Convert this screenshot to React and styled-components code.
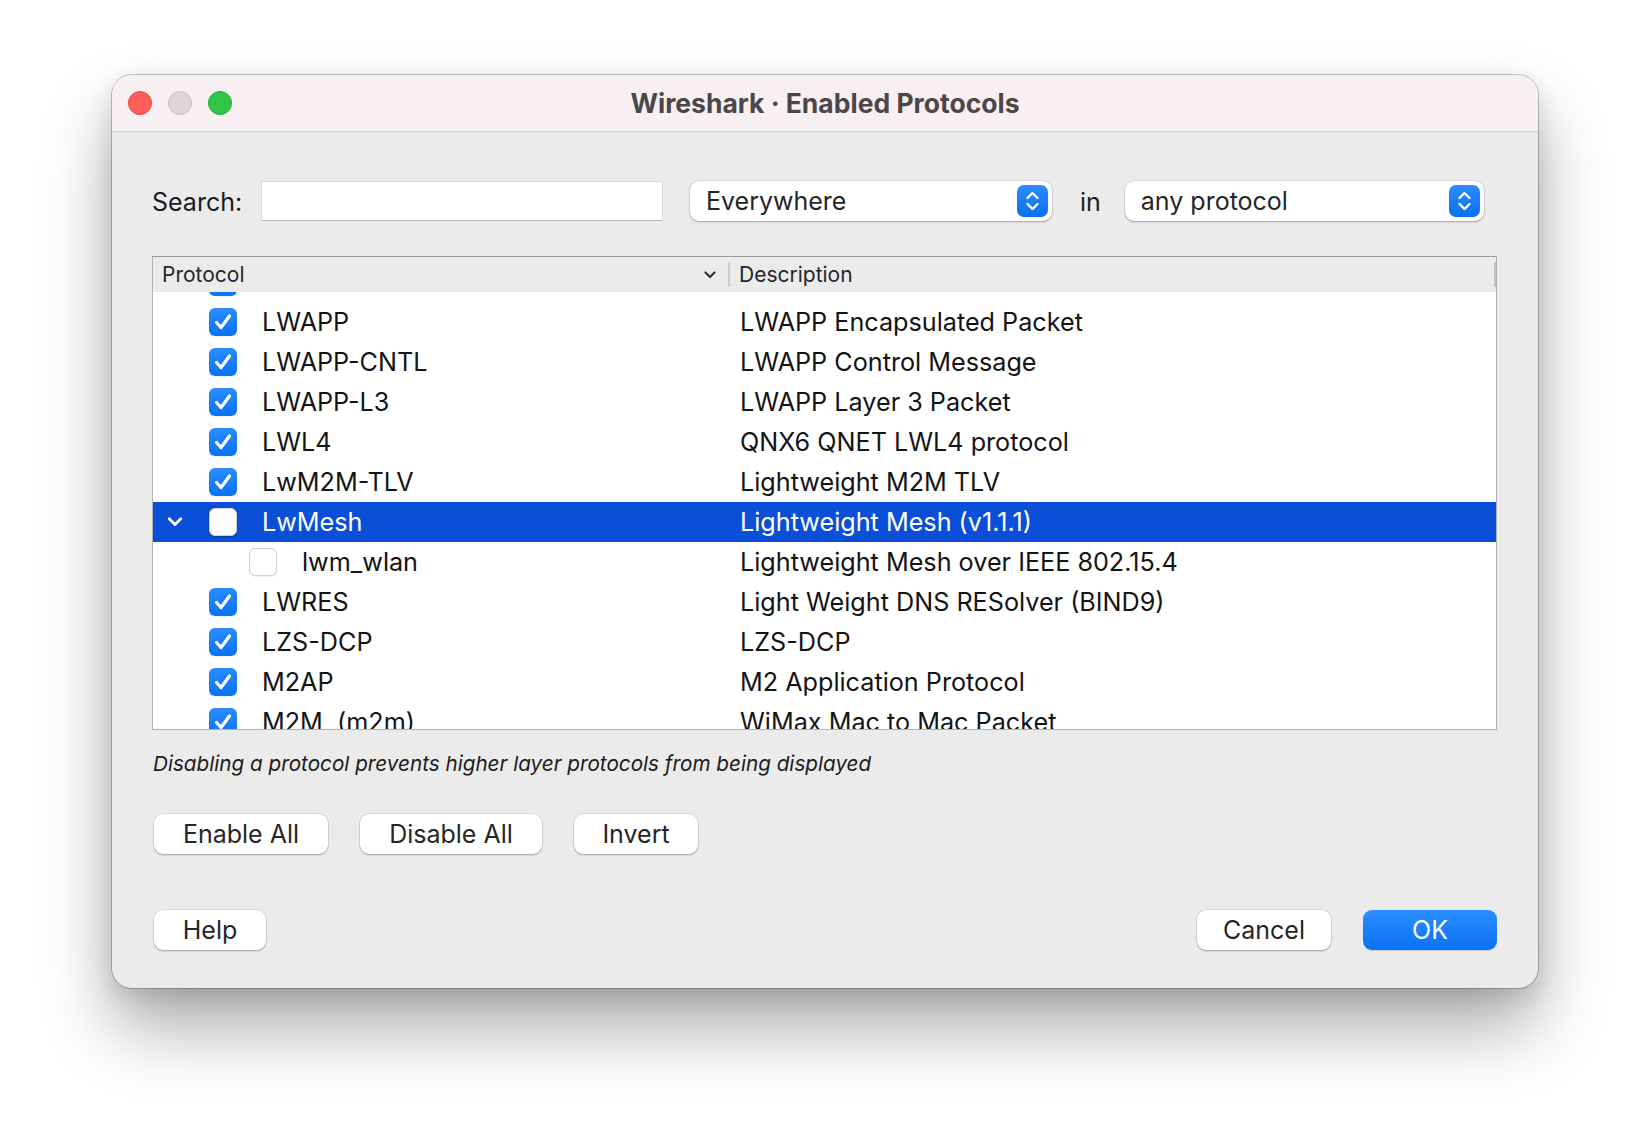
import React from "react";
import styled, { createGlobalStyle } from "styled-components";

const GlobalStyle = createGlobalStyle`
  html, body {
    margin: 0;
    padding: 0;
    background: #ffffff;
  }
  body {
    font-family: "Inter", "Liberation Sans", sans-serif;
    color: #1e1e1e;
  }
`;

const protocols = [
  { name: "LWAPP-ALT", desc: "LWAPP Alternate", checked: true },
  { name: "LWAPP", desc: "LWAPP Encapsulated Packet", checked: true },
  { name: "LWAPP-CNTL", desc: "LWAPP Control Message", checked: true },
  { name: "LWAPP-L3", desc: "LWAPP Layer 3 Packet", checked: true },
  { name: "LWL4", desc: "QNX6 QNET LWL4 protocol", checked: true },
  { name: "LwM2M-TLV", desc: "Lightweight M2M TLV", checked: true },
  { name: "LwMesh", desc: "Lightweight Mesh (v1.1.1)", checked: false, expanded: true, selected: true },
  { name: "lwm_wlan", desc: "Lightweight Mesh over IEEE 802.15.4", checked: false, child: true },
  { name: "LWRES", desc: "Light Weight DNS RESolver (BIND9)", checked: true },
  { name: "LZS-DCP", desc: "LZS-DCP", checked: true },
  { name: "M2AP", desc: "M2 Application Protocol", checked: true },
  { name: "M2M  (m2m)", desc: "WiMax Mac to Mac Packet", checked: true },
];

const Stepper = () => (
  <StepperBox>
    <svg width="31" height="32" viewBox="0 0 31 32">
      <path d="M10.5 13 L15.5 8 L20.5 13" fill="none" stroke="#fff" strokeWidth="2.4" strokeLinecap="round" strokeLinejoin="round" />
      <path d="M10.5 19 L15.5 24 L20.5 19" fill="none" stroke="#fff" strokeWidth="2.4" strokeLinecap="round" strokeLinejoin="round" />
    </svg>
  </StepperBox>
);

const Check = ({ checked, selected }) => (
  <CheckBox $checked={checked} $selected={selected}>
    {checked && (
      <svg width="28" height="28" viewBox="0 0 28 28">
        <path d="M7.5 14.5 L12 19.5 L20.5 8" fill="none" stroke="#fff" strokeWidth="3.2" strokeLinecap="round" strokeLinejoin="round" />
      </svg>
    )}
  </CheckBox>
);

const Chevron = ({ color, size = 14 }) => (
  <svg width={size} height={size} viewBox="0 0 14 14">
    <path d="M2.5 4.5 L7 9 L11.5 4.5" fill="none" stroke={color} strokeWidth="2.2" strokeLinecap="round" strokeLinejoin="round" />
  </svg>
);

const App = () => {
  return (
    <Page>
      <GlobalStyle />
      <Window>
        <TitleBar>
          <Lights>
            <Light $bg="#fe5f58" $border="#e2463f" />
            <Light $bg="#ddd5d9" $border="#c8bfc4" />
            <Light $bg="#30c748" $border="#22ab35" />
          </Lights>
          <Title>Wireshark · Enabled Protocols</Title>
          <span />
        </TitleBar>

        <Body>
          <SearchRow>
            <Label>Search:</Label>
            <SearchInput />
            <Select $width={362}>
              <span>Everywhere</span>
              <Stepper />
            </Select>
            <InLabel>in</InLabel>
            <Select $width={359}>
              <span>any protocol</span>
              <Stepper />
            </Select>
          </SearchRow>

          <Table>
            <HeaderRow>
              <HeaderCell>
                Protocol
                <HeaderChevron>
                  <Chevron color="#333" size={14} />
                </HeaderChevron>
              </HeaderCell>
              <HeaderCell $last>Description</HeaderCell>
            </HeaderRow>
            <TableBody>
              <RowList>
                {protocols.map((p) => (
                  <Row key={p.name} $selected={p.selected}>
                    <NameCell $child={p.child}>
                      <Disclosure>
                        {p.expanded && <Chevron color="#fff" size={18} />}
                      </Disclosure>
                      <Check checked={p.checked} selected={p.selected} />
                      <NameText>{p.name}</NameText>
                    </NameCell>
                    <DescCell>{p.desc}</DescCell>
                  </Row>
                ))}
              </RowList>
            </TableBody>
          </Table>

          <Hint>Disabling a protocol prevents higher layer protocols from being displayed</Hint>

          <ButtonRow>
            <Button $width={174}>Enable All</Button>
            <Button $width={182}>Disable All</Button>
            <Button $width={124}>Invert</Button>
          </ButtonRow>

          <FooterRow>
            <Button $width={112}>Help</Button>
            <FooterRight>
              <Button $width={134}>Cancel</Button>
              <Button $width={134} $primary>OK</Button>
            </FooterRight>
          </FooterRow>
        </Body>
      </Window>
    </Page>
  );
};

const Page = styled.div`
  width: 1650px;
  height: 1136px;
  box-sizing: border-box;
  padding: 75px 0 0 112px;
  overflow: hidden;
`;

const Window = styled.div`
  width: 1426px;
  height: 913px;
  box-sizing: border-box;
  border-radius: 20px;
  background: #ebebeb;
  overflow: hidden;
  box-shadow: 0 0 0 1px rgba(0, 0, 0, 0.22), 0 40px 70px rgba(0, 0, 0, 0.33),
    0 8px 24px rgba(0, 0, 0, 0.12);
  display: flex;
  flex-direction: column;
`;

const TitleBar = styled.div`
  height: 56px;
  flex-shrink: 0;
  background: #f8eff2;
  border-bottom: 1px solid #d2cdd0;
  display: grid;
  grid-template-columns: 1fr auto 1fr;
  align-items: center;
  padding: 0 16px;
`;

const Lights = styled.div`
  display: flex;
  gap: 16px;
`;

const Light = styled.span`
  width: 24px;
  height: 24px;
  box-sizing: border-box;
  border-radius: 50%;
  background: ${(p) => p.$bg};
  border: 1px solid ${(p) => p.$border};
`;

const Title = styled.div`
  font-size: 26.5px;
  font-weight: 700;
  color: #4b4647;
`;

const Body = styled.div`
  padding: 49px 41px 0 40px;
  display: flex;
  flex-direction: column;
`;

const SearchRow = styled.div`
  display: flex;
  align-items: center;
  height: 40px;
`;

const Label = styled.span`
  font-size: 25px;
  color: #1c1c1c;
  width: 110px;
  flex-shrink: 0;
  margin-top: 2px;
`;

const SearchInput = styled.div`
  width: 400px;
  height: 38px;
  background: #fff;
  box-shadow: 0 1px 0 #b9b9b9, 0 0 0 1px #dadada;
  flex-shrink: 0;
`;

const Select = styled.div`
  width: ${(p) => p.$width}px;
  height: 40px;
  box-sizing: border-box;
  margin-left: 28px;
  background: #fff;
  border-radius: 9px;
  box-shadow: 0 1px 2px rgba(0, 0, 0, 0.28), 0 0 0 0.5px rgba(0, 0, 0, 0.12);
  display: flex;
  align-items: center;
  justify-content: space-between;
  padding: 0 4px 0 16px;
  font-size: 25px;
  color: #262626;
  flex-shrink: 0;
`;

const StepperBox = styled.div`
  width: 31px;
  height: 32px;
  border-radius: 7px;
  background: linear-gradient(#2d8dfe, #0a6ff3);
  display: flex;
`;

const InLabel = styled.span`
  font-size: 25px;
  margin-left: 28px;
  margin-right: -4px;
  margin-top: 2px;
  color: #1c1c1c;
`;

const Table = styled.div`
  margin-top: 35px;
  width: 1345px;
  height: 474px;
  box-sizing: border-box;
  border: 1px solid #b2b2b2;
  border-top-color: #999;
  background: #fff;
  display: flex;
  flex-direction: column;
`;

const HeaderRow = styled.div`
  height: 35px;
  flex-shrink: 0;
  background: #ebebeb;
  display: grid;
  grid-template-columns: 577px 1fr;
`;

const HeaderCell = styled.div`
  position: relative;
  display: flex;
  align-items: center;
  font-size: 21px;
  color: #262626;
  padding-left: 9px;

  &::after {
    content: "";
    position: absolute;
    right: 0;
    top: 5px;
    bottom: 5px;
    width: 2px;
    background: ${(p) => (p.$last ? "#c2c2c2" : "#cdcdcd")};
  }
`;

const HeaderChevron = styled.span`
  position: absolute;
  right: 13px;
  top: 11px;
  display: flex;
`;

const TableBody = styled.div`
  flex: 1;
  overflow: hidden;
`;

const RowList = styled.div`
  margin-top: -30px;
`;

const Row = styled.div`
  height: 40px;
  display: grid;
  grid-template-columns: 577px 1fr;
  align-items: center;
  font-size: 25.2px;
  background: ${(p) => (p.$selected ? "#0b4fd9" : "transparent")};
  color: ${(p) => (p.$selected ? "#fff" : "#141414")};
`;

const NameCell = styled.div`
  display: flex;
  align-items: center;
  padding-left: ${(p) => (p.$child ? "50px" : "10px")};
`;

const Disclosure = styled.span`
  width: 24px;
  height: 24px;
  display: flex;
  align-items: center;
  justify-content: center;
  margin-right: 22px;
`;

const CheckBox = styled.span`
  width: 28px;
  height: 28px;
  box-sizing: border-box;
  border-radius: 6px;
  flex-shrink: 0;
  display: flex;
  background: ${(p) => (p.$checked ? "linear-gradient(#2b8cfe, #0a73f6)" : "#fff")};
  border: ${(p) => (p.$checked ? "none" : "1px solid #cfcfcf")};
  box-shadow: ${(p) =>
    p.$selected ? "0 1px 2px rgba(0,0,0,0.35)" : "0 1px 1px rgba(0,0,0,0.06)"};
`;

const NameText = styled.span`
  margin-left: 25px;
  white-space: pre;
`;

const DescCell = styled.div`
  padding-left: 10px;
  white-space: nowrap;
`;

const Hint = styled.div`
  margin-top: 21px;
  margin-left: 1px;
  font-size: 20.7px;
  font-style: italic;
  color: #1c1c1c;
  height: 26px;
  line-height: 26px;
`;

const ButtonRow = styled.div`
  margin-top: 37px;
  margin-left: 2px;
  display: flex;
  gap: 32px;
`;

const FooterRow = styled.div`
  margin-top: 56px;
  margin-left: 2px;
  display: flex;
  justify-content: space-between;
`;

const FooterRight = styled.div`
  display: flex;
  gap: 32px;
`;

const Button = styled.div`
  width: ${(p) => p.$width}px;
  height: 40px;
  border-radius: 9px;
  display: flex;
  align-items: center;
  justify-content: center;
  font-size: 25px;
  color: ${(p) => (p.$primary ? "#fff" : "#262626")};
  background: ${(p) => (p.$primary ? "linear-gradient(#2a8dfe, #0a72f6)" : "#fff")};
  box-shadow: ${(p) =>
    p.$primary
      ? "0 1px 1px rgba(0,0,0,0.15)"
      : "0 1px 2px rgba(0,0,0,0.28), 0 0 0 0.5px rgba(0,0,0,0.12)"};
`;

export default App;
